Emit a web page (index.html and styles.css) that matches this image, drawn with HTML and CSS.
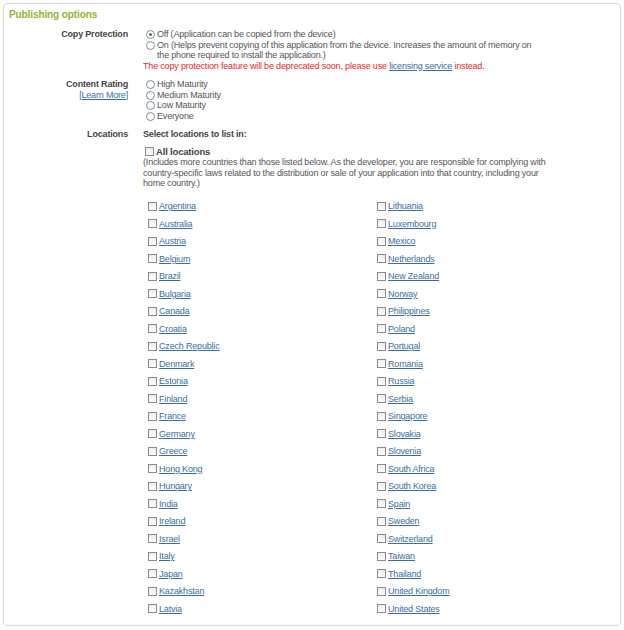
FILE: index.html
```html
<!DOCTYPE html>
<html>
<head>
<meta charset="utf-8">
<link rel="stylesheet" href="styles.css">
</head>
<body>
<div class="panel">
  <div class="title">Publishing options</div>

  <div class="row">
    <div class="label">Copy Protection</div>
    <div class="value">
      <div class="opt"><span class="radio on"></span>Off (Application can be copied from the device)</div>
      <div class="opt"><span class="radio"></span><span>On (Helps prevent copying of this application from the device. Increases the amount of memory on<br>the phone required to install the application.)</span></div>
      <div class="warn">The copy protection feature will be deprecated soon, please use <a href="#">licensing service</a> instead.</div>
    </div>
  </div>

  <div class="row rating">
    <div class="label">Content Rating<br><a class="learn" href="#">[Learn More]</a></div>
    <div class="value">
      <div class="opt"><span class="radio"></span>High Maturity</div>
      <div class="opt"><span class="radio"></span>Medium Maturity</div>
      <div class="opt"><span class="radio"></span>Low Maturity</div>
      <div class="opt"><span class="radio"></span>Everyone</div>
    </div>
  </div>

  <div class="row locations">
    <div class="label">Locations</div>
    <div class="value">
      <div class="select">Select locations to list in:</div>
      <div class="all"><span class="check"></span>All locations</div>
      <div class="note">(Includes more countries than those listed below. As the developer, you are responsible for complying with<br>country-specific laws related to the distribution or sale of your application into that country, including your<br>home country.)</div>
    </div>
  </div>

  <div class="countries">
    <div class="col">
      <div class="c"><span class="check"></span><a href="#">Argentina</a></div>
      <div class="c"><span class="check"></span><a href="#">Australia</a></div>
      <div class="c"><span class="check"></span><a href="#">Austria</a></div>
      <div class="c"><span class="check"></span><a href="#">Belgium</a></div>
      <div class="c"><span class="check"></span><a href="#">Brazil</a></div>
      <div class="c"><span class="check"></span><a href="#">Bulgaria</a></div>
      <div class="c"><span class="check"></span><a href="#">Canada</a></div>
      <div class="c"><span class="check"></span><a href="#">Croatia</a></div>
      <div class="c"><span class="check"></span><a href="#">Czech Republic</a></div>
      <div class="c"><span class="check"></span><a href="#">Denmark</a></div>
      <div class="c"><span class="check"></span><a href="#">Estonia</a></div>
      <div class="c"><span class="check"></span><a href="#">Finland</a></div>
      <div class="c"><span class="check"></span><a href="#">France</a></div>
      <div class="c"><span class="check"></span><a href="#">Germany</a></div>
      <div class="c"><span class="check"></span><a href="#">Greece</a></div>
      <div class="c"><span class="check"></span><a href="#">Hong Kong</a></div>
      <div class="c"><span class="check"></span><a href="#">Hungary</a></div>
      <div class="c"><span class="check"></span><a href="#">India</a></div>
      <div class="c"><span class="check"></span><a href="#">Ireland</a></div>
      <div class="c"><span class="check"></span><a href="#">Israel</a></div>
      <div class="c"><span class="check"></span><a href="#">Italy</a></div>
      <div class="c"><span class="check"></span><a href="#">Japan</a></div>
      <div class="c"><span class="check"></span><a href="#">Kazakhstan</a></div>
      <div class="c"><span class="check"></span><a href="#">Latvia</a></div>
    </div>
    <div class="col">
      <div class="c"><span class="check"></span><a href="#">Lithuania</a></div>
      <div class="c"><span class="check"></span><a href="#">Luxembourg</a></div>
      <div class="c"><span class="check"></span><a href="#">Mexico</a></div>
      <div class="c"><span class="check"></span><a href="#">Netherlands</a></div>
      <div class="c"><span class="check"></span><a href="#">New Zealand</a></div>
      <div class="c"><span class="check"></span><a href="#">Norway</a></div>
      <div class="c"><span class="check"></span><a href="#">Philippines</a></div>
      <div class="c"><span class="check"></span><a href="#">Poland</a></div>
      <div class="c"><span class="check"></span><a href="#">Portugal</a></div>
      <div class="c"><span class="check"></span><a href="#">Romania</a></div>
      <div class="c"><span class="check"></span><a href="#">Russia</a></div>
      <div class="c"><span class="check"></span><a href="#">Serbia</a></div>
      <div class="c"><span class="check"></span><a href="#">Singapore</a></div>
      <div class="c"><span class="check"></span><a href="#">Slovakia</a></div>
      <div class="c"><span class="check"></span><a href="#">Slovenia</a></div>
      <div class="c"><span class="check"></span><a href="#">South Africa</a></div>
      <div class="c"><span class="check"></span><a href="#">South Korea</a></div>
      <div class="c"><span class="check"></span><a href="#">Spain</a></div>
      <div class="c"><span class="check"></span><a href="#">Sweden</a></div>
      <div class="c"><span class="check"></span><a href="#">Switzerland</a></div>
      <div class="c"><span class="check"></span><a href="#">Taiwan</a></div>
      <div class="c"><span class="check"></span><a href="#">Thailand</a></div>
      <div class="c"><span class="check"></span><a href="#">United Kingdom</a></div>
      <div class="c"><span class="check"></span><a href="#">United States</a></div>
    </div>
  </div>
</div>
</body>
</html>
```

FILE: styles.css
```css
html, body {
  margin: 0;
  padding: 0;
  background: #fff;
}
body {
  padding: 3px 3px 0 3px;
  font-family: "Liberation Sans", Arial, sans-serif;
  font-size: 9px;
  letter-spacing: -0.18px;
  color: #555;
}
.panel {
  border: 1px solid #d8d8d8;
  border-radius: 4px;
  height: 623px;
  box-sizing: border-box;
  padding: 4px 0 0 0;
}
.title {
  color: #8fb52d;
  font-weight: bold;
  font-size: 10px;
  letter-spacing: -0.1px;
  padding-left: 5px;
  height: 21px;
  line-height: 13px;
}
a {
  color: #3a6e9e;
  text-decoration: underline;
}
.row {
  display: grid;
  grid-template-columns: 124px 1fr;
  column-gap: 15px;
  line-height: 10.5px;
}
.label {
  text-align: right;
  font-weight: bold;
  color: #444;
}
.learn {
  font-weight: normal;
}
.opt {
  display: flex;
  align-items: flex-start;
  padding-left: 3px;
}
.radio {
  flex: none;
  width: 9px;
  height: 9px;
  border: 1px solid #7a8ea0;
  border-radius: 50%;
  background: #fff;
  margin: 1px 2px 0 0;
  box-sizing: border-box;
  position: relative;
}
.radio.on::after {
  content: "";
  position: absolute;
  left: 2px;
  top: 2px;
  width: 3px;
  height: 3px;
  border-radius: 50%;
  background: #3a7a3a;
}
.warn {
  color: #e8262d;
}
.rating {
  margin-top: 8px;
}
.locations {
  margin-top: 8px;
}
.select {
  font-weight: bold;
  color: #444;
  margin-bottom: 7px;
}
.check {
  display: inline-block;
  flex: none;
  width: 9px;
  height: 9px;
  border: 1px solid #8a8a8a;
  background: linear-gradient(#eee, #fff);
  box-sizing: border-box;
  margin-right: 2px;
}
.all {
  display: flex;
  align-items: center;
  font-weight: bold;
  font-size: 9.5px;
  color: #444;
  padding-left: 2px;
}
.countries {
  display: grid;
  grid-template-columns: 229px 229px;
  padding-left: 144px;
  margin-top: 9px;
}
.c {
  display: flex;
  align-items: center;
  height: 17.5px;
}
```
